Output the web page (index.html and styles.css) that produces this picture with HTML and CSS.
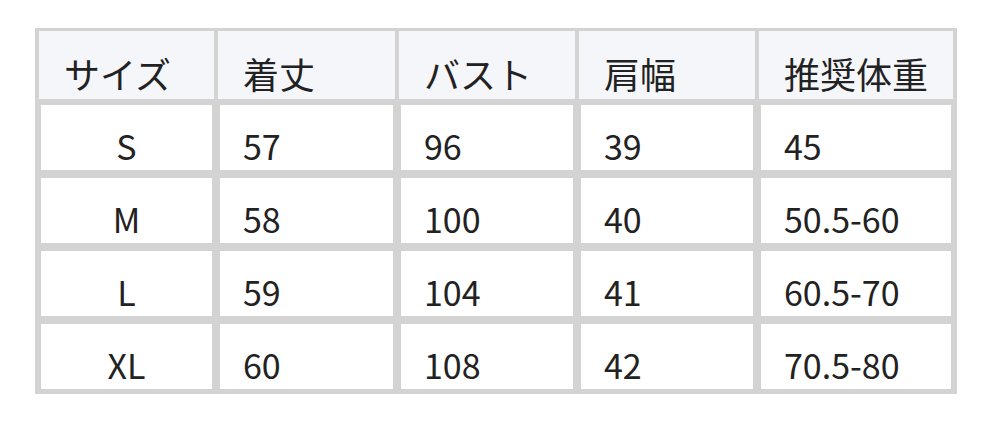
FILE: index.html
```html
<!DOCTYPE html>
<html lang="ja">
<head>
<meta charset="utf-8">
<link rel="stylesheet" href="styles.css">
</head>
<body>
<div class="wrap">
  <div class="size-table">
    <div class="cell head">サイズ</div>
    <div class="cell head">着丈</div>
    <div class="cell head">バスト</div>
    <div class="cell head">肩幅</div>
    <div class="cell head">推奨体重</div>

    <div class="cell first">S</div>
    <div class="cell">57</div>
    <div class="cell">96</div>
    <div class="cell">39</div>
    <div class="cell">45</div>

    <div class="cell first">M</div>
    <div class="cell">58</div>
    <div class="cell">100</div>
    <div class="cell">40</div>
    <div class="cell">50.5-60</div>

    <div class="cell first">L</div>
    <div class="cell">59</div>
    <div class="cell">104</div>
    <div class="cell">41</div>
    <div class="cell">60.5-70</div>

    <div class="cell first">XL</div>
    <div class="cell">60</div>
    <div class="cell">108</div>
    <div class="cell">42</div>
    <div class="cell">70.5-80</div>
  </div>
</div>
</body>
</html>
```
FILE: styles.css
```css
html, body {
  margin: 0;
  padding: 0;
  background: #ffffff;
}

.wrap {
  padding: 28px 0 0 35px;
}

.size-table {
  display: grid;
  width: 922px;
  box-sizing: border-box;
  padding: 3px 4px;
  gap: 4px;
  grid-template-columns: 175px 177px 176px 176px 194px;
  grid-template-rows: 68px repeat(4, 69px);
  background: #d3d3d3;
  font-family: "Noto Sans CJK JP", sans-serif;
  font-size: 34px;
  color: #222222;
}

.cell {
  box-sizing: border-box;
  display: flex;
  align-items: flex-end;
  background: #ffffff;
  border: 2px solid #d3d3d3;
  padding: 0 0 0 23px;
  line-height: normal;
  white-space: nowrap;
}

.cell.head {
  background: #f5f6fa;
  border: none;
  font-size: 36px;
  padding: 0 0 0 25px;
}

.cell.first {
  justify-content: center;
  padding-left: 0;
}
```
